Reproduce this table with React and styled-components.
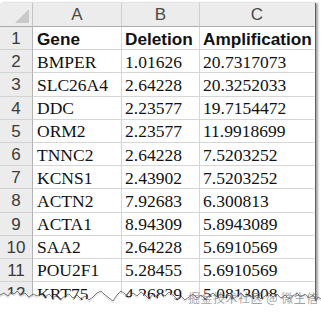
import React from 'react'
import styled, { createGlobalStyle } from 'styled-components'

const GlobalStyle = createGlobalStyle`
  html, body { margin: 0; padding: 0; background: #fff; }
  * { box-sizing: border-box; }
`

const rows = [
  ['BMPER', '1.01626', '20.7317073'],
  ['SLC26A4', '2.64228', '20.3252033'],
  ['DDC', '2.23577', '19.7154472'],
  ['ORM2', '2.23577', '11.9918699'],
  ['TNNC2', '2.64228', '7.5203252'],
  ['KCNS1', '2.43902', '7.5203252'],
  ['ACTN2', '7.92683', '6.300813'],
  ['ACTA1', '8.94309', '5.8943089'],
  ['SAA2', '2.64228', '5.6910569'],
  ['POU2F1', '5.28455', '5.6910569'],
  ['KRT75', '4.26829', '5.0813008'],
]

const Page = styled.div`
  position: relative;
  width: 321px;
  height: 312px;
  overflow: hidden;
  background: #fff;
  padding-top: 3px;
`

const Sheet = styled.div`
  display: grid;
  grid-template-columns: 33px 89px 78px 115px;
  grid-template-rows: 24px;
  grid-auto-rows: 23.2px;
  width: 316px;
  border-right: 1px solid #5e5e5e;
  box-shadow: 2px 0 2px rgba(0, 0, 0, 0.35);
`

const Corner = styled.div`
  position: relative;
  background: #ececec;
  border-right: 1px solid #c4c4c4;
  border-bottom: 1px solid #ababab;
  &::after {
    content: '';
    position: absolute;
    right: 3px;
    bottom: 3px;
    width: 0;
    height: 0;
    border-left: 14px solid transparent;
    border-bottom: 14px solid #c9c9c9;
  }
`

const ColHead = styled.div`
  display: flex;
  align-items: center;
  justify-content: center;
  background: #ececec;
  border-right: 1px solid ${p => (p.$last ? 'transparent' : '#cfcfcf')};
  border-bottom: 1px solid #ababab;
  font-family: "Liberation Sans", Arial, sans-serif;
  font-size: 17px;
  color: #4a4a4a;
  padding-top: 1px;
`

const RowHead = styled.div`
  display: flex;
  align-items: center;
  justify-content: center;
  background: #ececec;
  border-right: 1px solid #b4b4b4;
  border-bottom: 1px solid #d2d2d2;
  font-family: "Liberation Sans", Arial, sans-serif;
  font-size: 17px;
  color: #3a3a3a;
  padding-top: 2px;
`

const Cell = styled.div`
  display: flex;
  align-items: center;
  padding: 2px 0 0 ${p => (p.$first ? 4 : 3)}px;
  border-right: 1px solid ${p => (p.$last ? 'transparent' : '#d6d6d6')};
  border-bottom: 1px solid #d6d6d6;
  white-space: nowrap;
  overflow: hidden;
  color: #111;
  font-family: ${p => (p.$bold ? '"Liberation Sans", Arial, sans-serif' : '"Liberation Serif", "Times New Roman", serif')};
  font-weight: ${p => (p.$bold ? 700 : 400)};
  font-size: ${p => (p.$bold ? '17.2px' : '17.5px')};
`

const Tear = styled.svg`
  position: absolute;
  left: 0;
  top: 281px;
`

const Watermark = styled.div`
  position: absolute;
  left: 188px;
  top: 289px;
  font-family: "Noto Sans CJK SC", "Noto Sans", sans-serif;
  font-size: 12px;
  color: rgba(120, 120, 120, 0.7);
  white-space: nowrap;
  letter-spacing: 0.5px;
`

const tearPoints = [
  [0, 14], [4, 12], [8, 15], [11, 11], [14, 13], [17, 10], [21, 14], [25, 12], [29, 16],
  [33, 13], [37, 15], [41, 12], [45, 16], [49, 13], [53, 17], [57, 14], [61, 18], [65, 15],
  [69, 13], [73, 17], [77, 14], [81, 18], [85, 15], [89, 19], [93, 16], [97, 12], [101, 10],
  [105, 14], [109, 17], [113, 20], [117, 14], [121, 10], [125, 13], [129, 16], [133, 12],
  [137, 15], [141, 11], [145, 14], [149, 18], [153, 13], [157, 16], [161, 12], [165, 15],
  [169, 11], [173, 14], [177, 18], [181, 15], [185, 19], [189, 16], [193, 13], [197, 17],
  [201, 14], [205, 18], [209, 15], [213, 12], [217, 16], [221, 13], [225, 17], [229, 14],
  [233, 18], [237, 15], [241, 12], [245, 16], [249, 13], [253, 17], [257, 14], [261, 18],
  [265, 15], [269, 12], [273, 16], [277, 13], [281, 17], [285, 14], [289, 18], [293, 15],
  [297, 12], [301, 16], [305, 13], [309, 17], [313, 14], [316, 19], [318, 16], [321, 18],
]

const TornEdge = () => {
  const line = tearPoints.map(([x, y]) => `${x},${y}`).join(' ')
  const shade = tearPoints.map(([x, y]) => `${x},${y + 1.5}`).join(' ')
  return (
    <Tear width="321" height="32" viewBox="0 0 321 32">
      <polygon points={`${shade} 321,32 0,32`} fill="#9a9a9a" opacity="0.55" />
      <polygon points={`${line} 321,32 0,32`} fill="#fff" transform="translate(0,2)" />
      <polyline points={line} fill="none" stroke="#555" strokeWidth="0.8" />
    </Tear>
  )
}

export default function App() {
  return (
    <Page>
      <GlobalStyle />
      <Sheet>
        <Corner />
        <ColHead>A</ColHead>
        <ColHead>B</ColHead>
        <ColHead $last>C</ColHead>

        <RowHead>1</RowHead>
        <Cell $first $bold>Gene</Cell>
        <Cell $bold>Deletion</Cell>
        <Cell $bold $last>Amplification</Cell>

        {rows.map((r, i) => (
          <React.Fragment key={r[0]}>
            <RowHead>{i + 2}</RowHead>
            <Cell $first>{r[0]}</Cell>
            <Cell>{r[1]}</Cell>
            <Cell $last>{r[2]}</Cell>
          </React.Fragment>
        ))}
      </Sheet>
      <TornEdge />
      <Watermark>掘金技术社区 @ 微生信</Watermark>
    </Page>
  )
}
